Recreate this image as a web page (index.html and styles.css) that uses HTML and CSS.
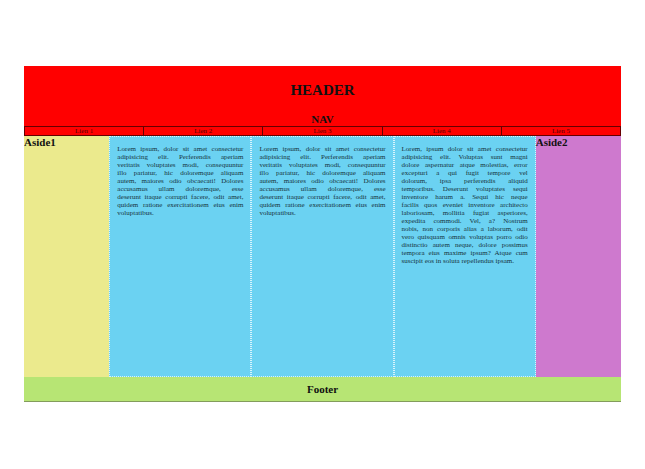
FILE: index.html
```html
<!DOCTYPE html>
<html lang="fr">
<head>
<meta charset="utf-8">
<meta name="viewport" content="width=device-width, initial-scale=1">
<title>Layout</title>
<link rel="stylesheet" href="styles.css">
</head>
<body>
<header class="header">
  <h1 class="header-title">HEADER</h1>
  <nav>
    <h2 class="title">NAV</h2>
    <ul class="links">
      <li><a href="#">Lien 1</a></li>
      <li><a href="#">Lien 2</a></li>
      <li><a href="#">Lien 3</a></li>
      <li><a href="#">Lien 4</a></li>
      <li><a href="#">Lien 5</a></li>
    </ul>
  </nav>
</header>
<div class="content">
  <aside class="aside-left"><h2 class="title">Aside1</h2></aside>
  <main class="articles">
    <article>
      Lorem ipsum, dolor sit amet consectetur<br>
      adipisicing elit. Perferendis aperiam<br>
      veritatis voluptates modi, consequuntur<br>
      illo pariatur, hic doloremque aliquam<br>
      autem, maiores odio obcaecati! Dolores<br>
      accusamus ullam doloremque, esse<br>
      deserunt itaque corrupti facere, odit amet,<br>
      quidem ratione exercitationem eius enim
      <span class="last-line">voluptatibus.</span>
    </article>
    <article>
      Lorem ipsum, dolor sit amet consectetur<br>
      adipisicing elit. Perferendis aperiam<br>
      veritatis voluptates modi, consequuntur<br>
      illo pariatur, hic doloremque aliquam<br>
      autem, maiores odio obcaecati! Dolores<br>
      accusamus ullam doloremque, esse<br>
      deserunt itaque corrupti facere, odit amet,<br>
      quidem ratione exercitationem eius enim
      <span class="last-line">voluptatibus.</span>
    </article>
    <article>
      Lorem, ipsum dolor sit amet consectetur<br>
      adipisicing elit. Voluptas sunt magni<br>
      dolore aspernatur atque molestias, error<br>
      excepturi a qui fugit tempore vel<br>
      dolorum, ipsa perferendis aliquid<br>
      temporibus. Deserunt voluptates sequi<br>
      inventore harum a. Sequi hic neque<br>
      facilis quos eveniet inventore architecto<br>
      laboriosam, mollitia fugiat asperiores,<br>
      expedita commodi. Vel, a? Nostrum<br>
      nobis, non corporis alias a laborum, odit<br>
      vero quisquam omnis voluptas porro odio<br>
      distinctio autem neque, dolore possimus<br>
      tempora eius maxime ipsum? Atque cum
      <span class="last-line">suscipit eos in soluta repellendus ipsam.</span>
    </article>
  </main>
  <aside class="aside-right"><h2 class="title">Aside2</h2></aside>
</div>
<footer class="footer"><h2 class="title">Footer</h2></footer>
</body>
</html>
```
FILE: styles.css
```css
* {
  box-sizing: border-box;
}

body {
  margin: 66px 24px;
  background: #fff;
  color: #111;
  font-family: "Liberation Serif", "Times New Roman", serif;
  font-size: 7px;
  line-height: 8px;
}

.header {
  display: flow-root;
  background: #f00;
  text-align: center;
}

.header-title {
  margin: 15px 0 14px;
  font-size: 15px;
  line-height: 18px;
}

.title {
  margin: 0;
  font-size: 11px;
  line-height: 13px;
}

.links {
  display: flex;
  margin: 0;
  padding: 0;
  border: 1px solid #600;
  list-style: none;
}

.links li {
  flex: 1;
}

.links li + li {
  border-left: 1px solid #600;
}

.links a {
  color: #500;
  text-decoration: none;
}

.content {
  display: grid;
  grid-template-columns: 1fr 5fr 1fr;
  min-height: 241px;
}

.aside-left {
  background: #ebea8d;
}

.aside-right {
  background: #ce79ce;
}

.articles {
  display: grid;
  grid-template-columns: repeat(3, 1fr);
}

.articles article {
  padding: 8px 7px;
  border: 1px dotted #d8f4fd;
  background: #6bd2f2;
  color: #16323c;
  text-align: justify;
  text-align-last: justify;
}

.last-line {
  display: block;
  text-align-last: left;
}

.footer {
  padding: 6px 0 5px;
  border-bottom: 1px solid #839c5c;
  background: #b7e574;
  text-align: center;
}
```
